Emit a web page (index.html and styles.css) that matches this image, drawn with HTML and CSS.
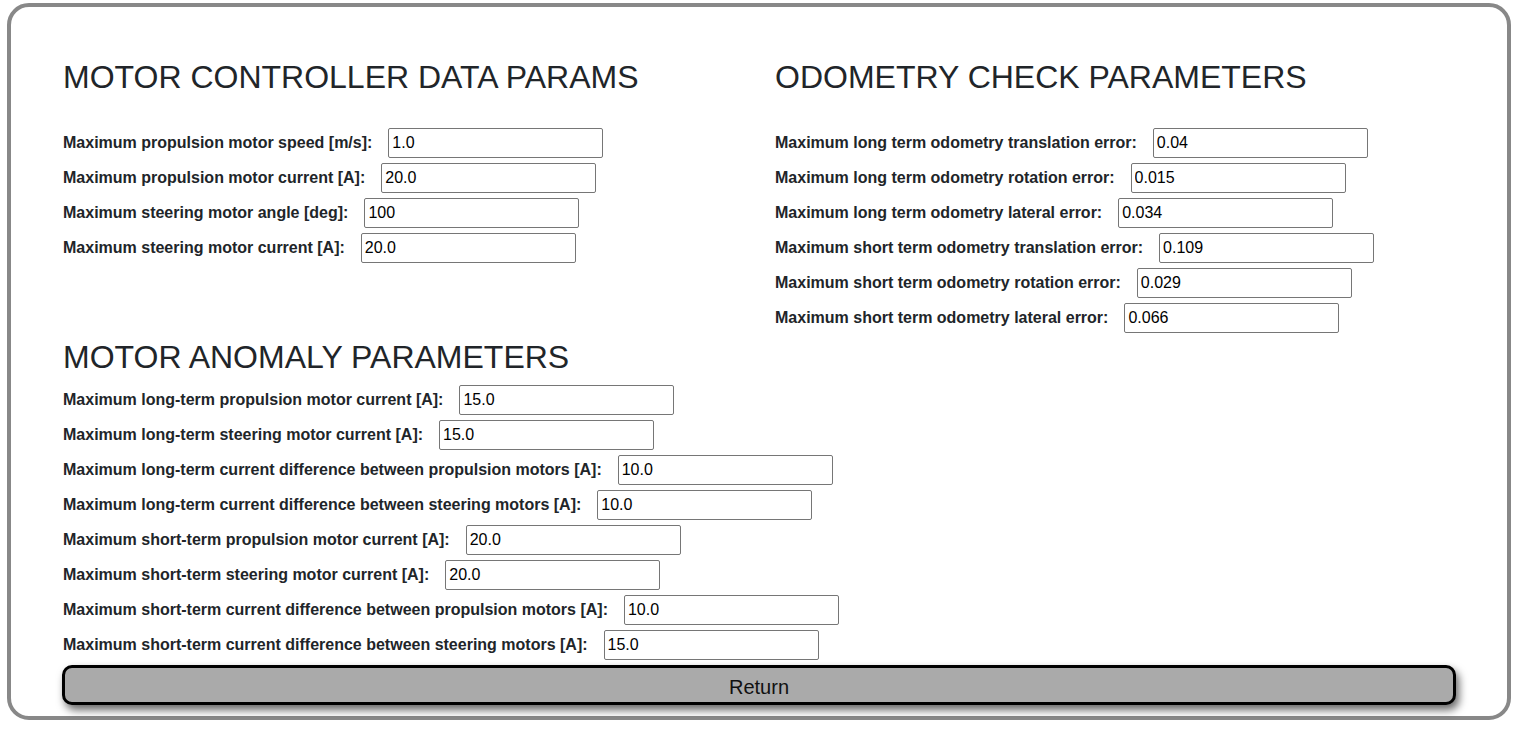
FILE: index.html
```html
<!DOCTYPE html>
<html lang="en">
<head>
<meta charset="utf-8">
<title>Parameters</title>
<link rel="stylesheet" href="styles.css">
</head>
<body>
<div class="panel">
  <div class="cols">
    <section class="col">
      <h2 class="heading heading-top">MOTOR CONTROLLER DATA PARAMS</h2>
      <div class="field"><label>Maximum propulsion motor speed [m/s]:</label><input type="text" value="1.0"></div>
      <div class="field"><label>Maximum propulsion motor current [A]:</label><input type="text" value="20.0"></div>
      <div class="field"><label>Maximum steering motor angle [deg]:</label><input type="text" value="100"></div>
      <div class="field"><label>Maximum steering motor current [A]:</label><input type="text" value="20.0"></div>
    </section>
    <section class="col">
      <h2 class="heading heading-top">ODOMETRY CHECK PARAMETERS</h2>
      <div class="field"><label>Maximum long term odometry translation error:</label><input type="text" value="0.04"></div>
      <div class="field"><label>Maximum long term odometry rotation error:</label><input type="text" value="0.015"></div>
      <div class="field"><label>Maximum long term odometry lateral error:</label><input type="text" value="0.034"></div>
      <div class="field"><label>Maximum short term odometry translation error:</label><input type="text" value="0.109"></div>
      <div class="field"><label>Maximum short term odometry rotation error:</label><input type="text" value="0.029"></div>
      <div class="field"><label>Maximum short term odometry lateral error:</label><input type="text" value="0.066"></div>
    </section>
  </div>
  <section class="anomaly">
    <h2 class="heading">MOTOR ANOMALY PARAMETERS</h2>
    <div class="field"><label>Maximum long-term propulsion motor current [A]:</label><input type="text" value="15.0"></div>
    <div class="field"><label>Maximum long-term steering motor current [A]:</label><input type="text" value="15.0"></div>
    <div class="field"><label>Maximum long-term current difference between propulsion motors [A]:</label><input type="text" value="10.0"></div>
    <div class="field"><label>Maximum long-term current difference between steering motors [A]:</label><input type="text" value="10.0"></div>
    <div class="field"><label>Maximum short-term propulsion motor current [A]:</label><input type="text" value="20.0"></div>
    <div class="field"><label>Maximum short-term steering motor current [A]:</label><input type="text" value="20.0"></div>
    <div class="field"><label>Maximum short-term current difference between propulsion motors [A]:</label><input type="text" value="10.0"></div>
    <div class="field"><label>Maximum short-term current difference between steering motors [A]:</label><input type="text" value="15.0"></div>
  </section>
  <button class="return-btn" type="button">Return</button>
</div>
</body>
</html>
```

FILE: styles.css
```css
html, body {
  margin: 0;
  padding: 0;
  background: #ffffff;
}

body {
  font-family: "Liberation Sans", Arial, sans-serif;
  color: #212529;
  padding: 3px 11px 0 7px;
}

.panel {
  box-sizing: border-box;
  width: 1504px;
  height: 717px;
  border: 4px solid #888888;
  border-radius: 22px;
  padding: 51px 51px 0 51px;
  background: #ffffff;
}

.cols {
  display: grid;
  grid-template-columns: 1fr 1fr;
  column-gap: 30px;
  align-items: start;
}

.heading {
  font-family: "Liberation Sans", Arial, sans-serif;
  font-weight: 400;
  font-size: 32px;
  line-height: 38.4px;
  margin: 0 0 8px 0;
  padding-left: 1px;
  color: #212529;
}

.heading-top {
  margin-bottom: 32px;
}

.field {
  display: flex;
  align-items: center;
  height: 30px;
  margin-bottom: 5px;
}

.field label {
  font-weight: 700;
  font-size: 16px;
  padding-left: 1px;
  margin-right: 16px;
  white-space: nowrap;
}

.field input {
  box-sizing: border-box;
  width: 215px;
  height: 30px;
  border: 1px solid #767676;
  border-radius: 2px;
  padding: 1px 3px;
  font-family: "Liberation Sans", Arial, sans-serif;
  font-size: 16px;
  color: #000000;
  background: #ffffff;
}

.return-btn {
  display: block;
  box-sizing: border-box;
  width: 100%;
  height: 40px;
  margin: 0;
  padding: 7px 6px 1px;
  border: 3px solid #000000;
  border-radius: 10px;
  background: #aaaaaa;
  font-family: "Liberation Sans", Arial, sans-serif;
  font-size: 20px;
  color: #111111;
  box-shadow: 3px 5px 8px rgba(0, 0, 0, 0.6);
  cursor: pointer;
}
```
